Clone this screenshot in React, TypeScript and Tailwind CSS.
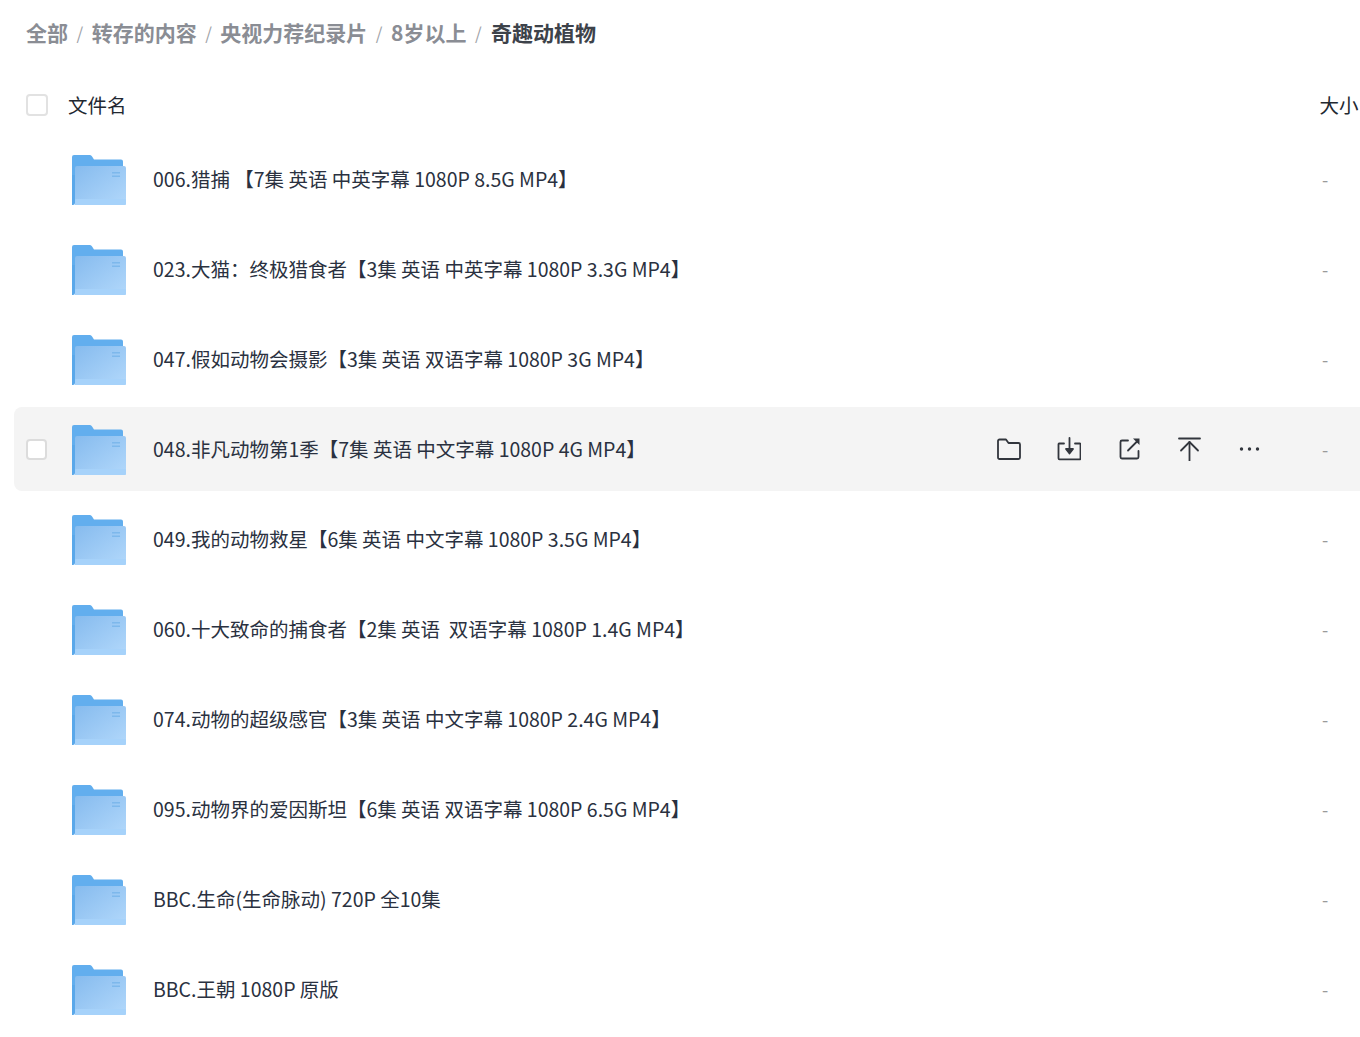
const FONT = "font-['Noto_Sans_CJK_SC','Noto_Sans',sans-serif]";

const crumbs = ["全部", "转存的内容", "央视力荐纪录片", "8岁以上"];

const files = [
  "006.猎捕 【7集 英语 中英字幕 1080P 8.5G MP4】",
  "023.大猫：终极猎食者【3集 英语 中英字幕 1080P 3.3G MP4】",
  "047.假如动物会摄影【3集 英语 双语字幕 1080P 3G MP4】",
  "048.非凡动物第1季【7集 英语 中文字幕 1080P 4G MP4】",
  "049.我的动物救星【6集 英语 中文字幕 1080P 3.5G MP4】",
  "060.十大致命的捕食者【2集 英语  双语字幕 1080P 1.4G MP4】",
  "074.动物的超级感官【3集 英语 中文字幕 1080P 2.4G MP4】",
  "095.动物界的爱因斯坦【6集 英语 双语字幕 1080P 6.5G MP4】",
  "BBC.生命(生命脉动) 720P 全10集",
  "BBC.王朝 1080P 原版",
];

function FolderIcon() {
  return (
    <svg width="54" height="50" viewBox="0 0 54 50" className="mt-[2px] shrink-0">
      <defs>
        <linearGradient id="front" x1="0" y1="0" x2="1" y2="1">
          <stop offset="0" stopColor="#86bbee" />
          <stop offset="1" stopColor="#b2d8fb" />
        </linearGradient>
      </defs>
      <path
        d="M0 2a2 2 0 0 1 2-2h15.500a3 3 0 0 1 2.400 1.200L22 4.500h27a2 2 0 0 1 2 2V44H0z"
        fill="#62aeee"
      />
      <path d="M0 20h3v28a2 2 0 0 1-2 2H0z" fill="#5aa8ea" />
      <path d="M3 13a2 2 0 0 1 2-2h47a2 2 0 0 1 2 2v35a2 2 0 0 1-2 2H3z" fill="url(#front)" />
      <rect x="3" y="44" width="51" height="6" rx="1" fill="#a6d2fa" />
      <rect x="40" y="17" width="8" height="1.500" fill="#7db8ec" />
      <rect x="40" y="20.500" width="8" height="1.500" fill="#7db8ec" />
    </svg>
  );
}

function RowActions() {
  const common = {
    width: 24,
    height: 24,
    viewBox: "0 0 24 24",
    fill: "none",
    stroke: "#32363d",
    strokeWidth: 1.800,
    strokeLinecap: "round" as const,
    strokeLinejoin: "round" as const,
  };
  return (
    <div className="flex items-center gap-9">
      <svg {...common}>
        <path d="M1 4a1.500 1.500 0 0 1 1.500-1.500h6.500l2.500 3.500h10a1.500 1.500 0 0 1 1.500 1.500v13a1.500 1.500 0 0 1-1.500 1.500h-19A1.500 1.500 0 0 1 1 20.500z" />
      </svg>
      <svg {...common}>
        <path d="M7 6.500H2.200a.8.8 0 0 0-.7.8v14a1 1 0 0 0 1 1h20a1 1 0 0 0 1-1v-14a.8.8 0 0 0-.7-.8H18" />
        <path d="M12.500 1v14" />
        <path d="M9 12h7l-3.500 4.500z" fill="#32363d" />
      </svg>
      <svg {...common}>
        <path d="M11 3.500H5a1.500 1.500 0 0 0-1.500 1.500v15A1.500 1.500 0 0 0 5 21.500h15a1.500 1.500 0 0 0 1.500-1.500V14" />
        <path d="M11 13.500L20 4.500" />
        <path d="M16 1.500h6.500V8z" fill="#32363d" stroke="none" />
      </svg>
      <svg {...common}>
        <path d="M2 1.500h21" />
        <path d="M12.500 24V5" />
        <path d="M4 13.500L12.500 5l8.500 8.500" />
      </svg>
      <svg {...common} stroke="none" fill="#32363d">
        <circle cx="4.500" cy="12" r="1.700" />
        <circle cx="12.500" cy="12" r="1.700" />
        <circle cx="20.500" cy="12" r="1.700" />
      </svg>
    </div>
  );
}

function FileRow({ name, active }: { name: string; active: boolean }) {
  return (
    <div className="h-[90px] pt-[2px]">
      <div
        className={`relative flex h-[84px] w-[1380px] items-center rounded-lg pl-[58px] ${
          active ? "bg-[#f4f4f4]" : ""
        }`}
      >
        {active && (
          <span className="absolute left-[12px] top-[32px] h-[21px] w-[21px] rounded-[4px] border-2 border-[#dcdcdc] bg-white" />
        )}
        <FolderIcon />
        <span className="ml-[27px] whitespace-pre text-[19.500px] text-[#2a3140]">{name}</span>
        {active && (
          <div className="absolute left-[983px] top-[30px]">
            <RowActions />
          </div>
        )}
        <span className="absolute left-[1308px] top-[29px] text-[18px] text-[#9a9a9a]">-</span>
      </div>
    </div>
  );
}

export default function App() {
  return (
    <div className={`h-[1037px] w-[1360px] overflow-hidden bg-white ${FONT}`}>
      <nav className="flex h-[68px] items-center pb-[2px] pl-[26px] text-[21px]">
        {crumbs.map((c) => (
          <span key={c} className="flex items-center">
            <span className="font-semibold text-[#8a8d94]">{c}</span>
            <span className="mx-[8.500px] text-[17px] text-[#a0a3a8]">/</span>
          </span>
        ))}
        <span className="ml-[1px] font-bold text-[#3d424a]">奇趣动植物</span>
      </nav>
      <div className="mt-[7px] flex h-[60px] w-[1400px] items-center pl-[26px]">
        <span className="h-[22px] w-[22px] rounded-[4px] border-2 border-[#e2e2e2] bg-white" />
        <span className="ml-[20px] text-[19.500px] text-[#222831]">文件名</span>
        <span className="ml-[1193px] text-[19.500px] text-[#222831]">大小</span>
      </div>
      <div className="pl-[14px]">
        {files.map((f, i) => (
          <FileRow key={f} name={f} active={i === 3} />
        ))}
      </div>
    </div>
  );
}
